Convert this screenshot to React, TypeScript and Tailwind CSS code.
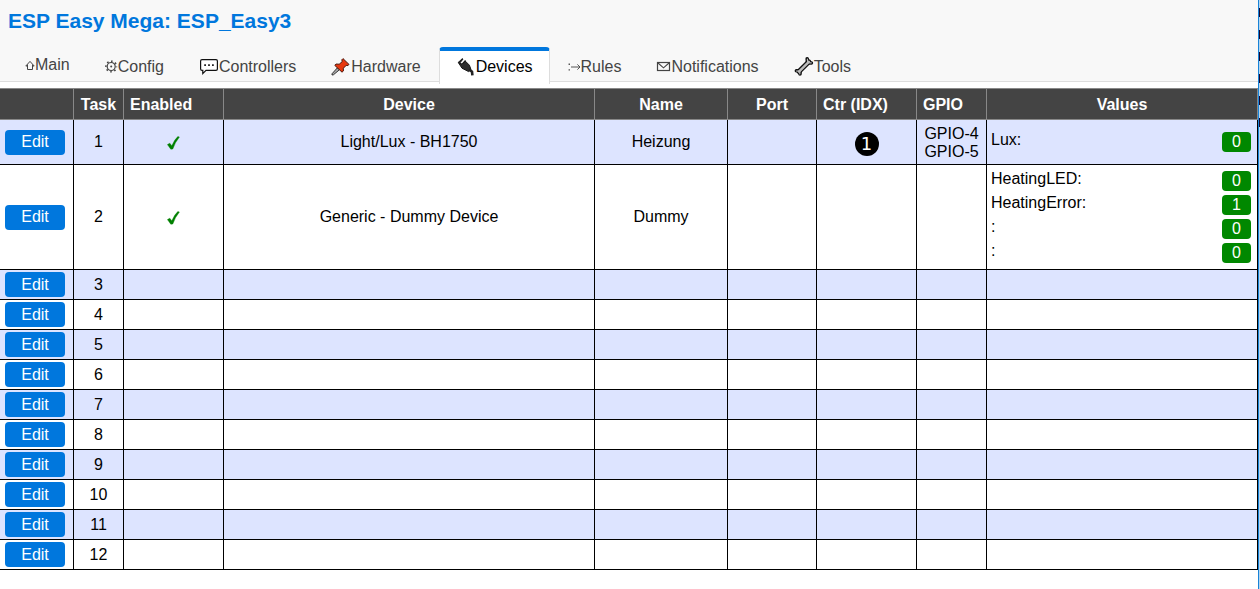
import type { ReactNode } from 'react'
import { clsx } from 'clsx'

interface TaskValue {
  label: string
  value: string
}

interface Task {
  id: number
  enabled?: boolean
  device?: string
  name?: string
  controller?: string
  gpio?: string[]
  values?: TaskValue[]
}

const tasks: Task[] = [
  {
    id: 1,
    enabled: true,
    device: 'Light/Lux - BH1750',
    name: 'Heizung',
    controller: '1',
    gpio: ['GPIO-4', 'GPIO-5'],
    values: [{ label: 'Lux', value: '0' }],
  },
  {
    id: 2,
    enabled: true,
    device: 'Generic - Dummy Device',
    name: 'Dummy',
    values: [
      { label: 'HeatingLED', value: '0' },
      { label: 'HeatingError', value: '1' },
      { label: '', value: '0' },
      { label: '', value: '0' },
    ],
  },
  { id: 3 },
  { id: 4 },
  { id: 5 },
  { id: 6 },
  { id: 7 },
  { id: 8 },
  { id: 9 },
  { id: 10 },
  { id: 11 },
  { id: 12 },
]

function HomeIcon() {
  return (
    <svg width="10" height="20" viewBox="0 0 10 20" fill="none" stroke="currentColor" aria-hidden="true">
      <path d="M0.8 11 L5 6.4 L9.2 11 M2.5 9.6 V14.5 H7.5 V9.6 M0.8 11 H2.5 M7.5 11 H9.2" strokeWidth="1" />
    </svg>
  )
}

function GearIcon() {
  return (
    <svg width="13" height="22" viewBox="0 0 13 22" fill="none" stroke="currentColor" aria-hidden="true">
      <circle cx="6.2" cy="11.5" r="4" strokeWidth="1.2" />
      <circle cx="6.2" cy="11.5" r="5.3" strokeWidth="1.6" strokeDasharray="1.6 2.56" strokeDashoffset="0.8" />
      <circle cx="6.2" cy="11.5" r="1" fill="currentColor" stroke="none" />
    </svg>
  )
}

function BubbleIcon() {
  return (
    <svg width="20" height="22" viewBox="0 0 20 22" fill="none" aria-hidden="true">
      <path
        d="M3 4.6 H17 Q18.4 4.6 18.4 6 V14 Q18.4 15.4 17 15.4 H7 L3.8 18.6 V15.4 H3 Q1.6 15.4 1.6 14 V6 Q1.6 4.6 3 4.6 Z"
        fill="#fff"
        stroke="#111"
        strokeWidth="1.2"
      />
      <path d="M5.2 9.2h1.8v1.8h-1.8z M9.1 9.2h1.8v1.8h-1.8z M13 9.2h1.8v1.8h-1.8z" fill="#222" />
    </svg>
  )
}

function PinIcon() {
  return (
    <svg width="20" height="22" viewBox="0 0 20 22" aria-hidden="true">
      <path d="M6.4 12.8 L1 18.8 L1 20 L2.4 19.8 L8.4 14.8 Z" fill="#aaa" stroke="#222" strokeWidth="0.9" />
      <path
        d="M12 3.6 L18 9.4 L17 10.6 L15.2 10.4 L12.4 13.2 L12.4 16 L11 17.2 L3.8 10.4 L5 9 L8.2 9.2 L11.2 6.6 L10.8 4.8 Z"
        fill="#e6380f"
        stroke="#3a1008"
        strokeWidth="0.9"
        strokeLinejoin="round"
      />
    </svg>
  )
}

function PlugIcon() {
  return (
    <svg width="20" height="22" viewBox="0 0 20 22" fill="none" aria-hidden="true">
      <path d="M3.4 8 L6.8 3.8 M6.4 9 L9.6 5.4" stroke="#222" strokeWidth="1.5" />
      <path d="M2.4 7.6 L6.4 9.2 L9.4 6.2 L13.4 10.2 L15 14.6 L12.6 16.6 L6 13.2 Z" fill="#2d2d2d" stroke="#151515" strokeWidth="1" strokeLinejoin="round" />
      <path d="M13 14.4 L16 16.6 L16.4 20.4" stroke="#222" strokeWidth="2.6" />
      <path d="M2.2 7.8 L6.8 3.8" stroke="#222" strokeWidth="1.2" />
    </svg>
  )
}

function RulesIcon() {
  return (
    <svg width="13" height="22" viewBox="0 0 13 22" fill="none" stroke="currentColor" aria-hidden="true">
      <path d="M3 12 H12 M9.4 9.4 L12 12 L9.4 14.6" strokeWidth="0.9" />
      <path d="M0.6 8.6h1.3v1.3h-1.3z M0.6 14.2h1.3v1.3h-1.3z" fill="currentColor" stroke="none" />
    </svg>
  )
}

function EnvelopeIcon() {
  return (
    <svg width="15" height="22" viewBox="0 0 15 22" fill="none" stroke="currentColor" aria-hidden="true">
      <rect x="1.5" y="7.5" width="12" height="8" strokeWidth="1.2" />
      <path d="M2 8 L7.5 12.8 L13 8" strokeWidth="1.1" />
    </svg>
  )
}

function WrenchIcon() {
  return (
    <svg width="20" height="22" viewBox="0 0 20 22" fill="none" strokeLinecap="round" strokeLinejoin="round" aria-hidden="true">
      <path d="M5 16.6 L14.8 6.8" stroke="#111" strokeWidth="5" />
      <path d="M13.2 3.8 L13.6 7.8 L17.4 8 M2.4 15.8 L6 16 L6 19" stroke="#111" strokeWidth="3.6" />
      <path d="M5 16.6 L14.8 6.8" stroke="#bdbdbd" strokeWidth="2.4" />
      <path d="M13.4 4.2 L13.8 7.6 L17.2 7.8 M2.6 16 L5.8 16.2 L5.8 18.8" stroke="#bdbdbd" strokeWidth="1.2" />
    </svg>
  )
}

function CheckIcon() {
  return (
    <svg className="inline-block align-middle" width="14" height="14" viewBox="0 0 14 14" role="img" aria-label="Enabled">
      <path d="M0.4 8.6 L2.8 7.2 L4.8 9.8 Q7.4 3.6 10.8 0.6 L12.4 1 Q8.2 6 5.8 13 L3.8 13.2 Z" fill="#008000" stroke="#008000" strokeWidth="0.4" />
    </svg>
  )
}

const menu: { label: string; icon: ReactNode; active?: boolean; short?: boolean }[] = [
  { label: 'Main', icon: <HomeIcon />, short: true },
  { label: 'Config', icon: <GearIcon /> },
  { label: 'Controllers', icon: <BubbleIcon /> },
  { label: 'Hardware', icon: <PinIcon /> },
  { label: 'Devices', icon: <PlugIcon />, active: true },
  { label: 'Rules', icon: <RulesIcon /> },
  { label: 'Notifications', icon: <EnvelopeIcon /> },
  { label: 'Tools', icon: <WrenchIcon /> },
]

function Header() {
  return (
    <header className="border-b border-[#ddd] bg-[#f8f8f8] px-2 pt-2">
      <h1 className="text-[21px] leading-[26px] font-bold text-[#07d]">ESP Easy Mega: ESP_Easy3</h1>
      <nav className="mt-[13px] flex items-start gap-px">
        {menu.map((item) => (
          <a
            key={item.label}
            href={`#${item.label.toLowerCase()}`}
            aria-current={item.active ? 'page' : undefined}
            className={clsx(
              '-mb-[3px] flex rounded-t border-x border-t-4 px-4 pt-1 pb-[5px]',
              item.short ? 'leading-5' : 'leading-6',
              item.active ? 'border-x-[#ddd] border-t-[#07d] bg-white text-black' : 'border-transparent text-[#444]'
            )}
          >
            {item.icon}
            {item.label}
          </a>
        ))}
      </nav>
    </header>
  )
}

const th = 'border-y border-r border-[#888] px-1.5 pt-[5px] pb-[3px] leading-[22px] font-bold'
const td = 'border-r border-b border-black px-1 py-0.5 text-center leading-[18px]'

function TaskRow({ task }: { task: Task }) {
  return (
    <tr className="odd:bg-[#dde4ff]">
      <td className={td}>
        <button type="button" className="ml-px block h-[25px] w-[60px] rounded bg-[#07d] text-white">
          Edit
        </button>
      </td>
      <td className={td}>{task.id}</td>
      <td className={td}>{task.enabled && <CheckIcon />}</td>
      <td className={td}>{task.device}</td>
      <td className={td}>{task.name}</td>
      <td className={td} />
      <td className={td}>
        {task.controller && (
          <span className="mt-1 inline-flex size-6 items-center justify-center rounded-full bg-black align-middle font-['DejaVu_Sans',sans-serif] text-lg leading-6 text-white">
            {task.controller}
          </span>
        )}
      </td>
      <td className="border-r border-b border-black pt-[5px] pb-[3px] text-center leading-[18px]">
        {task.gpio?.map((pin) => (
          <div key={pin}>{pin}</div>
        ))}
      </td>
      <td className="border-r border-b border-black px-1 py-1.5">
        {task.values && (
          <div className="flex flex-col gap-1">
            {task.values.map((item, i) => (
              <div key={i} className="flex items-start justify-between pr-0.5">
                <span className="leading-4">{item.label}:</span>
                <span className="w-[29px] rounded bg-[#080] text-center leading-5 text-white">{item.value}</span>
              </div>
            ))}
          </div>
        )}
      </td>
    </tr>
  )
}

export default function App() {
  return (
    <div className="flex min-h-screen bg-white font-['Liberation_Sans',Arial,sans-serif] text-base text-black">
      <div className="min-w-0 flex-1">
        <Header />
        <main className="pt-1.5">
          <table className="w-full table-fixed border-separate border-spacing-0">
            <colgroup>
              <col className="w-[74px]" />
              <col className="w-[50px]" />
              <col className="w-[100px]" />
              <col />
              <col className="w-[133px]" />
              <col className="w-[89px]" />
              <col className="w-[100px]" />
              <col className="w-[70px]" />
              <col className="w-[271px]" />
            </colgroup>
            <thead className="bg-[#444] text-white">
              <tr>
                <th className={th} aria-label="Edit" />
                <th className={th}>Task</th>
                <th className={clsx(th, 'text-left')}>Enabled</th>
                <th className={th}>Device</th>
                <th className={th}>Name</th>
                <th className={th}>Port</th>
                <th className={clsx(th, 'text-left')}>Ctr (IDX)</th>
                <th className={clsx(th, 'text-left')}>GPIO</th>
                <th className={th}>Values</th>
              </tr>
            </thead>
            <tbody>
              {tasks.map((task) => (
                <TaskRow key={task.id} task={task} />
              ))}
            </tbody>
          </table>
        </main>
      </div>
      {/* window edge */}
      <div className="w-px bg-[#1883d7]" />
      <div className="w-px bg-[#b5d5ee]">
        <div className="h-32 bg-[repeating-linear-gradient(to_bottom,#b5d5ee_0px,#b5d5ee_8px,#1a0a30_8px,#1a0a30_17px,#b5d5ee_17px,#b5d5ee_22px)]" />
      </div>
    </div>
  )
}
